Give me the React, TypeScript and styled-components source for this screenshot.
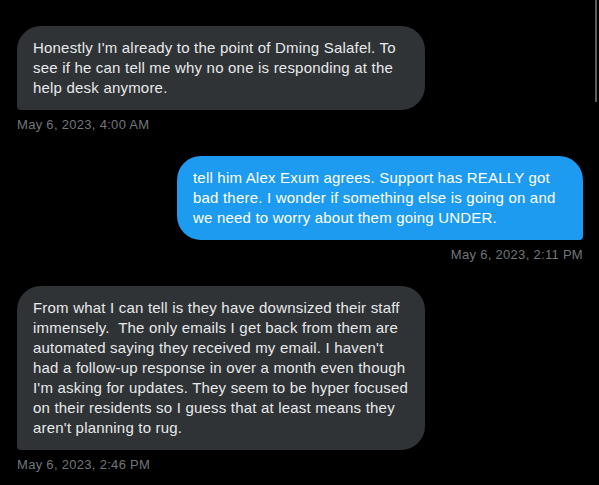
import { createGlobalStyle, styled } from 'styled-components';

const GlobalStyle = createGlobalStyle`
  html, body {
    margin: 0;
    padding: 0;
    background: #000;
  }
  body {
    font-family: "Liberation Sans", Arial, sans-serif;
  }
`;

const Thread = styled.div`
  position: relative;
  width: 599px;
  height: 485px;
  overflow: hidden;
  box-sizing: border-box;
  padding: 26px 16px 0 17px;
  display: flex;
  flex-direction: column;
`;

const Message = styled.div<{ $mine?: boolean }>`
  display: flex;
  flex-direction: column;
  align-items: ${(p) => (p.$mine ? 'flex-end' : 'flex-start')};
  margin-bottom: 23px;
`;

const Bubble = styled.div<{ $mine?: boolean }>`
  box-sizing: border-box;
  width: ${(p) => (p.$mine ? '406px' : '408px')};
  padding: 12px 16px;
  border-radius: ${(p) => (p.$mine ? '24px 24px 4px 24px' : '24px 24px 24px 4px')};
  background: ${(p) => (p.$mine ? '#1d9bf0' : '#2f3336')};
  color: ${(p) => (p.$mine ? '#ffffff' : '#e7e9ea')};
  font-size: 15px;
  line-height: 20px;
  letter-spacing: 0.2px;
`;

const Line = styled.span`
  display: block;
  white-space: pre;
`;

const Stamp = styled.div`
  margin-top: 7px;
  font-size: 13px;
  line-height: 16px;
  letter-spacing: 0.3px;
  color: #71767b;
`;

const ScrollThumb = styled.div`
  position: absolute;
  top: 0;
  right: 2px;
  width: 2px;
  height: 102px;
  background: #5b5e61;
`;

const messages = [
  {
    mine: false,
    lines: [
      "Honestly I'm already to the point of Dming Salafel. To",
      'see if he can tell me why no one is responding at the',
      'help desk anymore.',
    ],
    time: 'May 6, 2023, 4:00 AM',
  },
  {
    mine: true,
    lines: [
      'tell him Alex Exum agrees. Support has REALLY got',
      'bad there. I wonder if something else is going on and',
      'we need to worry about them going UNDER.',
    ],
    time: 'May 6, 2023, 2:11 PM',
  },
  {
    mine: false,
    lines: [
      'From what I can tell is they have downsized their staff',
      'immensely.  The only emails I get back from them are',
      "automated saying they received my email. I haven't",
      'had a follow-up response in over a month even though',
      "I'm asking for updates. They seem to be hyper focused",
      'on their residents so I guess that at least means they',
      "aren't planning to rug.",
    ],
    time: 'May 6, 2023, 2:46 PM',
  },
];

function App() {
  return (
    <>
      <GlobalStyle />
      <Thread>
        {messages.map((m, i) => (
          <Message key={i} $mine={m.mine}>
            <Bubble $mine={m.mine}>
              {m.lines.map((line, j) => (
                <Line key={j}>{line}</Line>
              ))}
            </Bubble>
            <Stamp>{m.time}</Stamp>
          </Message>
        ))}
        <ScrollThumb />
      </Thread>
    </>
  );
}

export default App;
